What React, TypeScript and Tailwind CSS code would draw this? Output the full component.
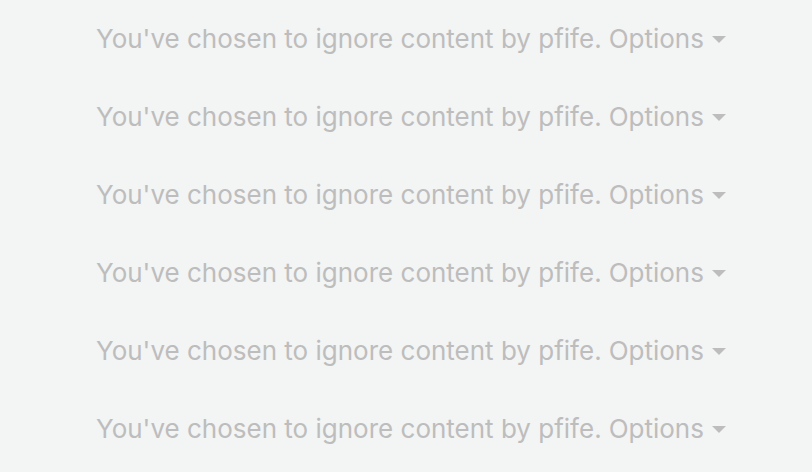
const rows = Array.from({ length: 6 })

export default function App() {
  return (
    <div className="min-h-screen w-full bg-[#f3f4f4] pl-[96px] pt-[23px] font-['Inter',sans-serif]">
      <div className="flex flex-col gap-[46px]">
        {rows.map((_, i) => (
          <div key={i} className="flex items-center h-[32px] text-[26px] leading-[32px] text-[#bdbdbd]">
            <span>You've chosen to ignore content by pfife.</span>
            <span className="ml-[7px]">Options</span>
            <svg className="ml-[8px] mt-[1px]" width="14" height="7" viewBox="0 0 14 7">
              <path d="M0 0 L14 0 L7 7 Z" fill="#bdbdbd" />
            </svg>
          </div>
        ))}
      </div>
    </div>
  )
}
